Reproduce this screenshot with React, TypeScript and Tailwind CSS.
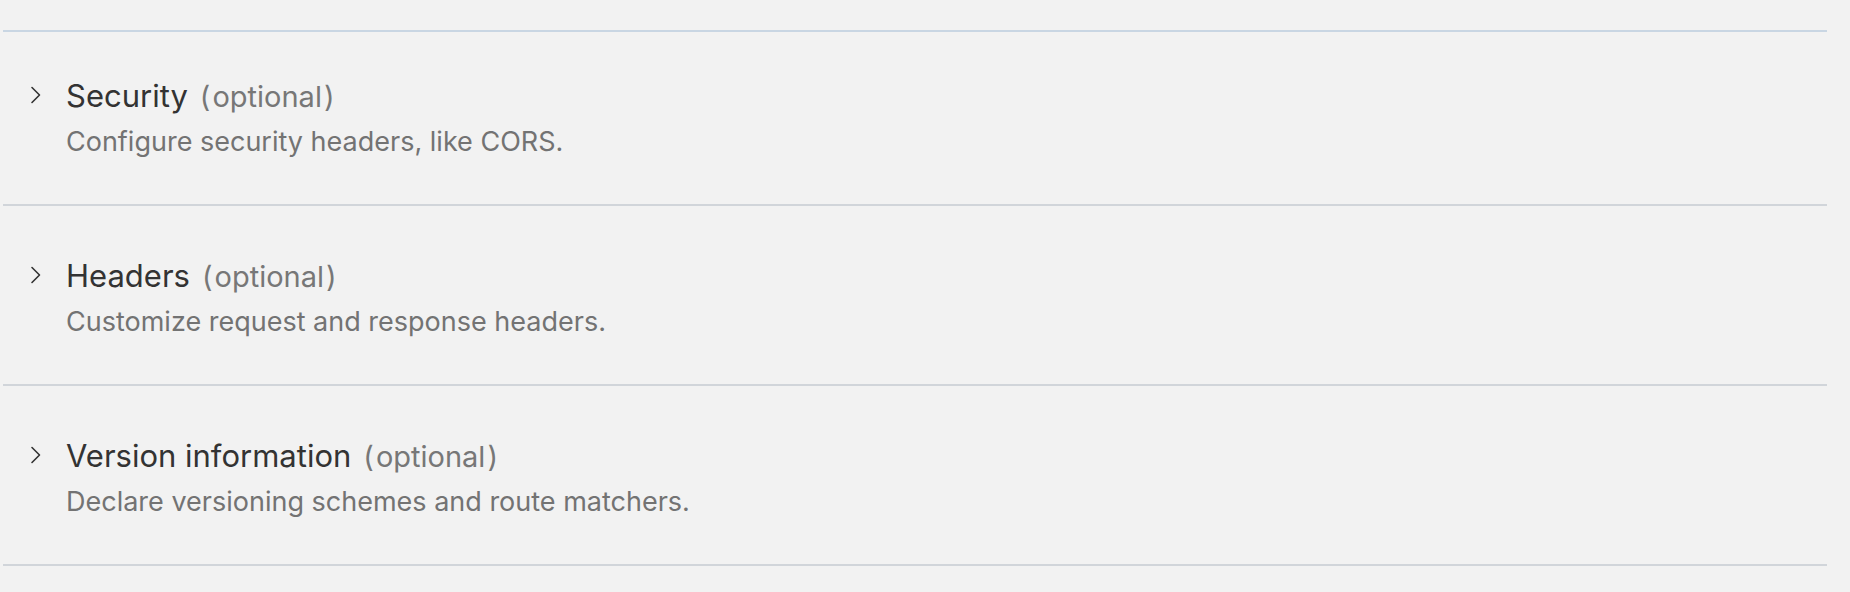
import React from 'react';

const sections = [
  { title: 'Security', description: 'Configure security headers, like CORS.' },
  { title: 'Headers', description: 'Customize request and response headers.' },
  { title: 'Version information', description: 'Declare versioning schemes and route matchers.' },
];

const Chevron = () => (
  <svg className="w-[12px] h-[18px] mt-[8px] shrink-0" viewBox="0 0 12 18" fill="none">
    <path d="M2 1.5 L9.5 9 L2 16.5" stroke="#333333" strokeWidth="1.6" strokeLinecap="round" strokeLinejoin="round" />
  </svg>
);

export default function App() {
  return (
    <div className="min-h-screen bg-[#f2f2f2] pt-[30px] font-['Inter',sans-serif]">
      <div className="ml-[3px] mr-[23px]">
        <div className="h-[2px] bg-[#c9d6e3]" />
        {sections.map((s, i) => (
          <div key={s.title}>
            <div className={`flex pl-[27px] pb-[46px] ${i === 0 ? 'pt-[46px]' : 'pt-[52px]'}`}>
              <Chevron />
              <div className="ml-[24px]">
                <div className="flex items-baseline h-[36px] text-[31px] leading-[36px] text-[#333333]">
                  <span>{s.title}</span>
                  <span className="ml-[12px] text-[29px] text-[#777777]">(</span>
                  <span className="ml-[2px] text-[29px] text-[#777777]">optional</span>
                  <span className="ml-[2px] text-[29px] text-[#777777]">)</span>
                </div>
                <div className="mt-[12px] text-[27px] leading-[32px] text-[#737373]">{s.description}</div>
              </div>
            </div>
            <div className="h-[2px] bg-[#d1d5da]" />
          </div>
        ))}
      </div>
    </div>
  );
}
